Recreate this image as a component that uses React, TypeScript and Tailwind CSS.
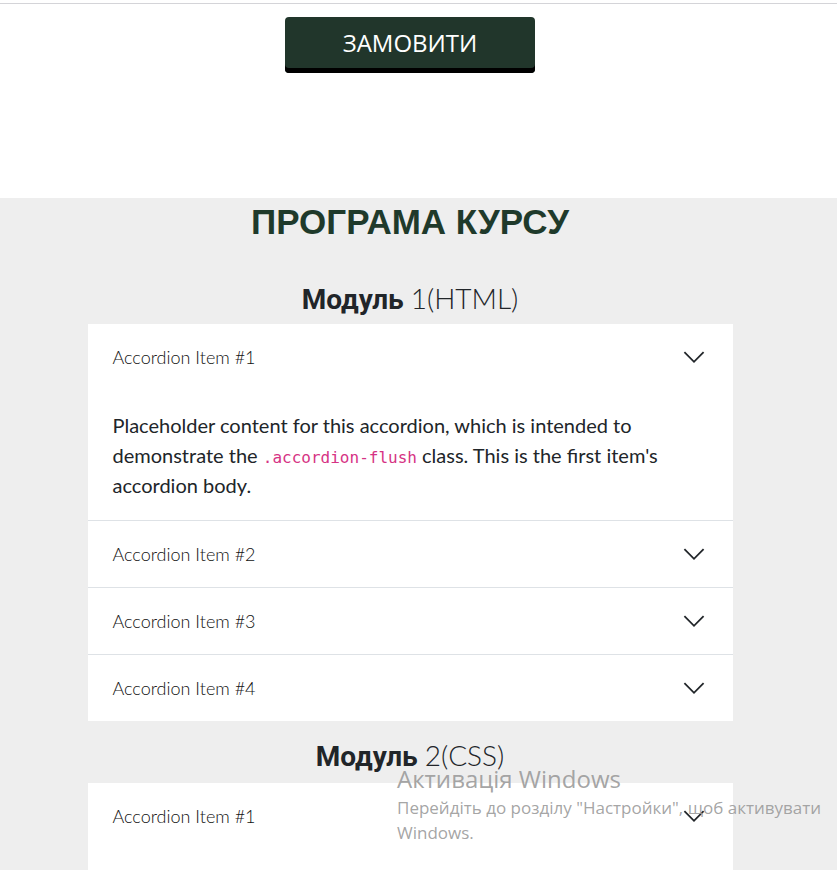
import React from 'react';

const items = ['Accordion Item #1', 'Accordion Item #2', 'Accordion Item #3', 'Accordion Item #4'];

function Chevron() {
  return (
    <svg width="24" height="24" viewBox="0 0 16 16" fill="none" className="text-[#212529]">
      <path d="M1.6 4.8 8 11.2l6.4-6.4" stroke="currentColor" strokeWidth="1.2" />
    </svg>
  );
}

function Accordion({ open }: { open: boolean }) {
  return (
    <div className="mx-auto w-[645px] bg-white">
      {items.map((title, i) => (
        <div key={title} className={i < items.length - 1 ? 'border-b border-[#dee2e6]' : ''}>
          <div className="flex h-[66px] items-center justify-between pl-[25px] pr-[27px]">
            <span className="text-[18px] font-light text-[#111] [font-family:Lato,sans-serif]">{title}</span>
            <Chevron />
          </div>
          {open && i === 0 && (
            <div className="px-[25px] pb-[20px] pt-[20px] text-[20px] leading-[30px] text-[#212529] [font-family:Lato,sans-serif]">
              Placeholder content for this accordion, which is intended to demonstrate the{' '}
              <code className="text-[16px] leading-none text-[#d63384] [font-family:'DejaVu_Sans_Mono',monospace]">.accordion-flush</code>{' '}
              class. This is the first item's accordion body.
            </div>
          )}
        </div>
      ))}
    </div>
  );
}

function ModuleTitle({ n, name }: { n: number; name: string }) {
  return (
    <h3 className="text-center text-[28px] leading-[48px] text-[#212529]">
      <span className="font-bold [font-family:Roboto,sans-serif]">Модуль </span>
      <span className="font-light [font-family:Lato,sans-serif]">
        {n}({name})
      </span>
    </h3>
  );
}

export default function App() {
  return (
    <div className="relative h-[870px] w-full overflow-hidden bg-white">
      <div className="mt-[3px] border-t border-[#d4d4d8]" />
      <div className="flex h-[194px] w-[820px] justify-center pt-[13px]">
        <button className="h-[56px] w-[250px] rounded-[4px] bg-[#21362b] pb-[4px] text-[24px] text-white shadow-[inset_0_-5px_0_#000] [font-family:'Open_Sans',sans-serif]">
          ЗАМОВИТИ
        </button>
      </div>
      <section className="bg-[#eeeeee] pb-10">
        <div className="w-[820px]">
          <h2 className="text-center text-[35px] font-bold leading-[48px] text-[#1f3a2b] [font-family:'Liberation_Sans',Arial,sans-serif]">
            ПРОГРАМА КУРСУ
          </h2>
          <div className="mt-[28px]">
            <ModuleTitle n={1} name="HTML" />
            <Accordion open />
          </div>
          <div className="mt-[10px]">
            <ModuleTitle n={2} name="CSS" />
            <div className="mt-[2px]">
              <Accordion open />
            </div>
          </div>
        </div>
      </section>
      <div className="pointer-events-none absolute left-[397px] top-[763px] text-[#9a9a9a]/90 [font-family:'Open_Sans',sans-serif]">
        <div className="text-[24px] leading-[32px]">Активація Windows</div>
        <div className="text-[17px] leading-[25px]">
          Перейдіть до розділу "Настройки", щоб активувати
          <br />
          Windows.
        </div>
      </div>
    </div>
  );
}
